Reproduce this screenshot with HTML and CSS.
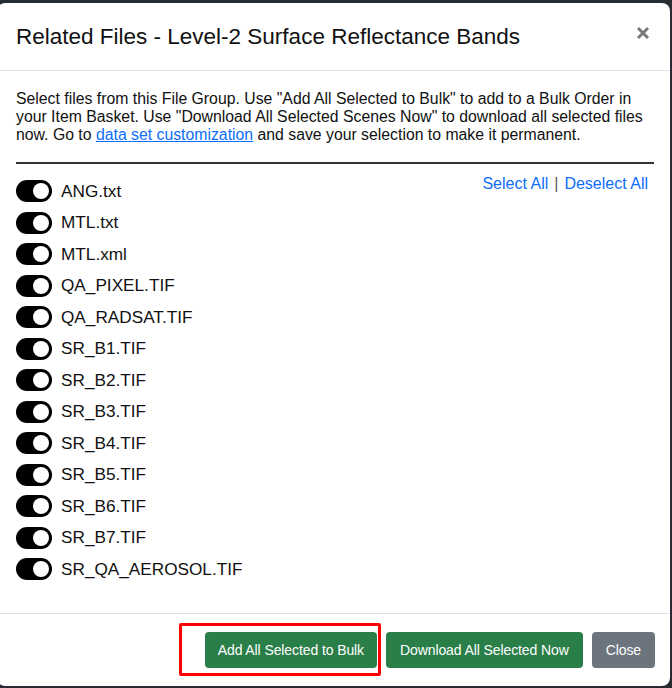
FILE: index.html
```html
<!DOCTYPE html>
<html lang="en">
<head>
<meta charset="utf-8">
<title>Related Files</title>
<link rel="stylesheet" href="styles.css">
</head>
<body>
<div class="modal">
  <div class="modal-header">
    <h2 class="modal-title">Related Files - Level-2 Surface Reflectance Bands</h2>
    <button class="btn-close" aria-label="Close">
      <svg width="14" height="14" viewBox="0 0 14 14"><path d="M2 2 L12 12 M12 2 L2 12" stroke="#7a7a7a" stroke-width="3" stroke-linecap="butt"/></svg>
    </button>
  </div>
  <div class="modal-body">
    <p class="intro">Select files from this File Group. Use "Add All Selected to Bulk" to add to a Bulk Order in your Item Basket. Use "Download All Selected Scenes Now" to download all selected files now. Go to <a href="#">data set customization</a> and save your selection to make it permanent.</p>
    <hr class="rule">
    <div class="files">
      <ul class="file-list">
        <li class="file"><span class="switch"><span class="knob"></span></span>ANG.txt</li>
        <li class="file"><span class="switch"><span class="knob"></span></span>MTL.txt</li>
        <li class="file"><span class="switch"><span class="knob"></span></span>MTL.xml</li>
        <li class="file"><span class="switch"><span class="knob"></span></span>QA_PIXEL.TIF</li>
        <li class="file"><span class="switch"><span class="knob"></span></span>QA_RADSAT.TIF</li>
        <li class="file"><span class="switch"><span class="knob"></span></span>SR_B1.TIF</li>
        <li class="file"><span class="switch"><span class="knob"></span></span>SR_B2.TIF</li>
        <li class="file"><span class="switch"><span class="knob"></span></span>SR_B3.TIF</li>
        <li class="file"><span class="switch"><span class="knob"></span></span>SR_B4.TIF</li>
        <li class="file"><span class="switch"><span class="knob"></span></span>SR_B5.TIF</li>
        <li class="file"><span class="switch"><span class="knob"></span></span>SR_B6.TIF</li>
        <li class="file"><span class="switch"><span class="knob"></span></span>SR_B7.TIF</li>
        <li class="file"><span class="switch"><span class="knob"></span></span>SR_QA_AEROSOL.TIF</li>
      </ul>
      <div class="select-links"><a href="#">Select All</a><span class="sep">|</span><a href="#">Deselect All</a></div>
    </div>
  </div>
  <div class="modal-footer">
    <span class="highlight"><button class="btn btn-success btn-add">Add All Selected to Bulk</button></span>
    <button class="btn btn-success">Download All Selected Now</button>
    <button class="btn btn-secondary">Close</button>
  </div>
</div>
</body>
</html>
```
FILE: styles.css
```css
html, body {
  margin: 0;
  padding: 0;
}
body {
  background: #262c31;
  height: 688px;
  overflow: hidden;
  font-family: "Liberation Sans", Arial, sans-serif;
  color: #212529;
}
.modal {
  margin: 3px 2px 0 -3px;
  height: 683px;
  background: #fff;
  border-radius: 8px;
  display: flex;
  flex-direction: column;
}
.modal-header {
  display: flex;
  align-items: center;
  justify-content: space-between;
  padding: 17px 20px 17px 19px;
  border-bottom: 1px solid #dee2e6;
}
.modal-title {
  margin: 0;
  font-size: 22.5px;
  font-weight: 400;
  line-height: 33px;
  color: #111;
}
.btn-close {
  border: 0;
  background: none;
  padding: 0;
  width: 14px;
  height: 14px;
  display: flex;
  margin-top: -8px;
}
.modal-body {
  flex: 1;
  padding: 19px 16px 0 19px;
}
.intro {
  margin: 0;
  font-size: 15.8px;
  line-height: 18.2px;
  color: #111;
}
.intro a {
  color: #0d6efd;
  text-decoration: underline;
}
.rule {
  margin: 17px 0 0;
  border: 0;
  border-top: 2px solid #333;
}
.files {
  display: flex;
  justify-content: space-between;
  align-items: flex-start;
  margin-top: 12px;
}
.file-list {
  list-style: none;
  margin: 0;
  padding: 0;
}
.file {
  height: 31.5px;
  display: flex;
  align-items: center;
  gap: 9px;
  font-size: 17.2px;
  color: #111;
}
.switch {
  width: 36px;
  height: 22px;
  border-radius: 11px;
  background: #000;
  display: flex;
  align-items: center;
  justify-content: flex-end;
  padding-right: 3px;
  box-sizing: border-box;
}
.knob {
  width: 16px;
  height: 16px;
  border-radius: 50%;
  background: #fff;
}
.select-links {
  font-size: 16px;
  line-height: 18px;
  margin-top: -1px;
  margin-right: 6px;
  display: flex;
  gap: 6px;
}
.select-links a {
  color: #0d6efd;
  text-decoration: none;
}
.sep {
  color: #555;
}
.modal-footer {
  display: flex;
  justify-content: flex-end;
  align-items: center;
  gap: 9px;
  padding: 18px 15px 18px 12px;
  border-top: 1px solid #dee2e6;
}
.highlight {
  position: relative;
  display: flex;
}
.highlight::after {
  content: "";
  position: absolute;
  left: -26px;
  top: -9px;
  right: -4px;
  bottom: -8px;
  border: 3px solid #f00;
  border-radius: 2px;
}
.btn {
  height: 36px;
  border: 0;
  border-radius: 4px;
  padding: 0 14px;
  font-family: "Liberation Sans", Arial, sans-serif;
  font-size: 14px;
  letter-spacing: -0.1px;
  color: #fff;
}
.btn-add {
  padding: 0 13px;
}
.btn-success {
  background: #2a7e48;
}
.btn-secondary {
  background: #6c757d;
}
```
